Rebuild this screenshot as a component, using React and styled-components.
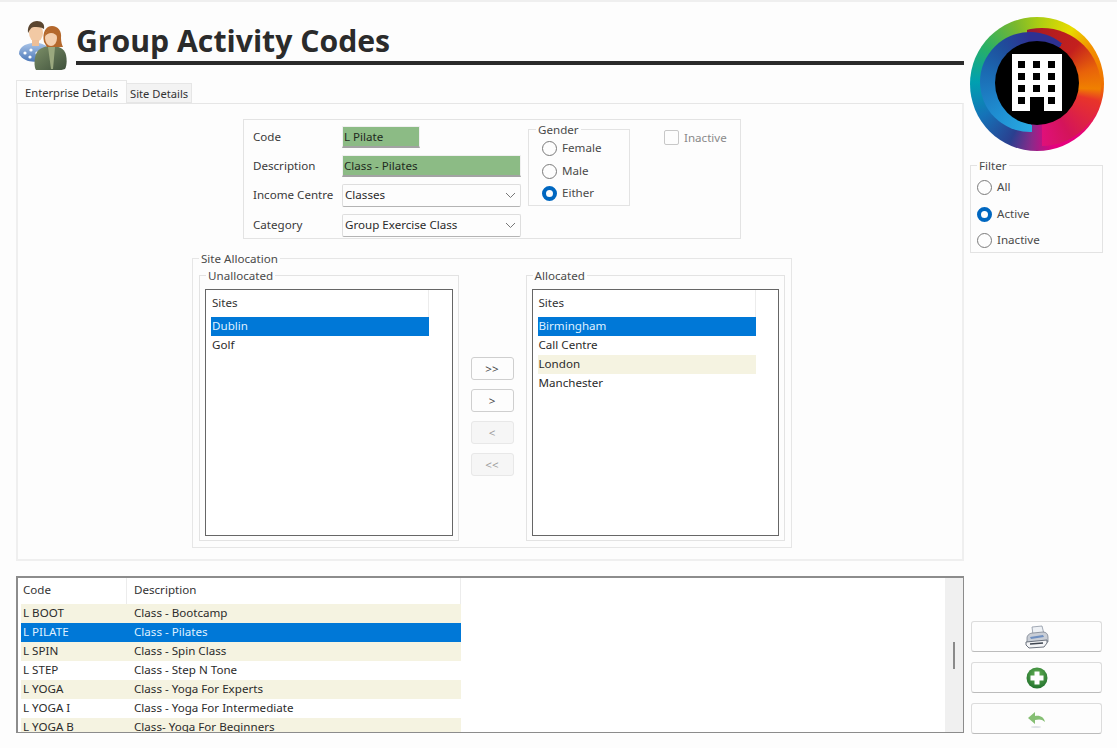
import React from "react";
import styled, { createGlobalStyle } from "styled-components";

const GROUP_CODES = [
  { code: "L BOOT", text: "Class - Bootcamp", tone: "alt" },
  { code: "L PILATE", text: "Class - Pilates", tone: "selected" },
  { code: "L SPIN", text: "Class - Spin Class", tone: "alt" },
  { code: "L STEP", text: "Class - Step N Tone" },
  { code: "L YOGA", text: "Class - Yoga For Experts", tone: "alt" },
  { code: "L YOGA I", text: "Class - Yoga For Intermediate" },
  { code: "L YOGA B", text: "Class- Yoga For Beginners", tone: "alt" },
];

const UNALLOCATED = [{ name: "Dublin", tone: "selected" }, { name: "Golf" }];

const ALLOCATED = [
  { name: "Birmingham", tone: "selected" },
  { name: "Call Centre" },
  { name: "London", tone: "alt" },
  { name: "Manchester" },
];

function PeopleIcon() {
  return (
    <svg width="50" height="50" viewBox="0 0 50 50">
      <defs>
        <linearGradient id="shirt" x1="0" y1="0" x2="0" y2="1">
          <stop offset="0" stopColor="#a9c4e8" />
          <stop offset="1" stopColor="#4c78b8" />
        </linearGradient>
        <linearGradient id="top" x1="0" y1="0" x2="1" y2="1">
          <stop offset="0" stopColor="#7d9068" />
          <stop offset="1" stopColor="#3d4f3a" />
        </linearGradient>
      </defs>
      <path d="M1 34c0-7 6-10 13-11l7 0c5 1 8 3 9 6l-8 12c-8 2-17 0-21-7z" fill="url(#shirt)" />
      <circle cx="7" cy="33" r="1.600" fill="#fff" />
      <circle cx="13" cy="30" r="1.600" fill="#fff" />
      <circle cx="12" cy="37" r="1.600" fill="#fff" />
      <circle cx="19" cy="33" r="1.600" fill="#fff" />
      <ellipse cx="18" cy="13" rx="7" ry="9" fill="#f2c9a4" />
      <path d="M10 13c-1-8 4-12 9-12s8 3 7 8c-3-2-7-2-10-2-3 0-4 3-6 6z" fill="#5b4630" />
      <rect x="14" y="20" width="7" height="6" fill="#eebf98" />
      <path d="M18 50c-2-3-2-11 0-16 2-5 7-7 12-8l7 0c6 1 10 4 11 9 1 5 1 10-1 14-9 3-21 3-29 1z" fill="url(#top)" />
      <path d="M30 27l3 22 2 0 2-22z" fill="#9aa87e" />
      <path d="M26 22c-2-10 2-16 8-16 6 0 10 5 9 12 0 4 1 7 2 9l-6 0 -10 0z" fill="#b4682c" />
      <ellipse cx="33" cy="18" rx="6" ry="8" fill="#f4cfae" />
      <path d="M27 16c1-6 6-8 10-7 3 1 5 5 4 9-2-3-5-5-8-5-2 0-4 1-6 3z" fill="#b4682c" />
    </svg>
  );
}

function BuildingIcon() {
  const cols = [48, 63, 78];
  const rows = [45, 57, 69, 81];
  return (
    <svg width="84" height="84" viewBox="25 25 84 84">
      <rect x="42" y="38" width="50" height="57" fill="#fff" />
      {rows.map((y) =>
        cols.map((x) => <rect key={`${x}-${y}`} x={x} y={y} width="7" height="7" fill="#000" />)
      )}
      <rect x="60" y="81" width="14" height="14" fill="#000" />
    </svg>
  );
}

function PrinterIcon() {
  return (
    <svg width="24" height="24" viewBox="0 0 24 24">
      <path d="M7 2l10-1 2 8-11 1z" fill="#eef1f5" stroke="#8d96a3" strokeWidth="0.8" />
      <path d="M2 13c0-3 3-5 6-5l10-1c3 0 5 2 5 5v5l-21 2z" fill="#c9ced6" stroke="#7c8490" strokeWidth="0.8" />
      <path d="M5 12l13-2 1 2-13 2z" fill="#6f8fc0" />
      <path d="M1 17l21-2 0 3-3 4-15 1-3-3z" fill="#f4f5f7" stroke="#5c6470" strokeWidth="0.9" />
      <path d="M5 19l13-1" stroke="#3e4550" strokeWidth="1.400" />
    </svg>
  );
}

function PlusIcon() {
  return (
    <svg width="22" height="22" viewBox="0 0 22 22">
      <defs>
        <radialGradient id="plusGreen" cx="0.5" cy="0.35" r="0.7">
          <stop offset="0" stopColor="#66b257" />
          <stop offset="1" stopColor="#1e6e2a" />
        </radialGradient>
      </defs>
      <circle cx="11" cy="11" r="10.500" fill="url(#plusGreen)" />
      <path d="M8.500 4.500h5v4h4v5h-4v4h-5v-4h-4v-5h4z" fill="#fff" />
    </svg>
  );
}

function UndoIcon() {
  return (
    <svg width="20" height="20" viewBox="0 0 20 20">
      <path d="M1 9l7-6v4c5-1 9 1 10 6-3-3-6-3-10-2v4z" fill="#86bf74" />
      <ellipse cx="9" cy="18" rx="5" ry="1" fill="#dfe2e6" />
    </svg>
  );
}

function Chevron() {
  return (
    <ChevronSvg width="11" height="7" viewBox="0 0 11 7">
      <path d="M1 1l4.500 4.500L10 1" fill="none" stroke="#777" strokeWidth="1" />
    </ChevronSvg>
  );
}

function RadioOption({ label, checked, gap }) {
  return (
    <RadioRow $gap={gap}>
      <RadioDot $checked={checked} />
      {label}
    </RadioRow>
  );
}

function SiteList({ sites }) {
  return (
    <ListBox>
      <ListHeader>Sites</ListHeader>
      {sites.map((s) => (
        <SiteRow key={s.name} $tone={s.tone}>
          {s.name}
        </SiteRow>
      ))}
    </ListBox>
  );
}

export default function App() {
  return (
    <>
      <GlobalStyle />
      <Page>
        <LeftColumn>
          <Header>
            <PeopleIcon />
            <Title>Group Activity Codes</Title>
          </Header>

          <Tabs>
            <Tab $active>Enterprise Details</Tab>
            <Tab>Site Details</Tab>
          </Tabs>

          <Panel>
            <FormBox>
              <Fields>
                <FieldLabel>Code</FieldLabel>
                <TextValue $width="78px">L Pilate</TextValue>
                <FieldLabel>Description</FieldLabel>
                <TextValue>Class - Pilates</TextValue>
                <FieldLabel>Income Centre</FieldLabel>
                <SelectBox>
                  Classes
                  <Chevron />
                </SelectBox>
                <FieldLabel>Category</FieldLabel>
                <SelectBox>
                  Group Exercise Class
                  <Chevron />
                </SelectBox>
              </Fields>

              <GenderGroup>
                <Legend $x="-6px">Gender</Legend>
                <RadioOption label="Female" gap="7.500px" />
                <RadioOption label="Male" gap="7.500px" />
                <RadioOption label="Either" gap="7.500px" checked />
              </GenderGroup>

              <InactiveCheck>
                <CheckSquare />
                Inactive
              </InactiveCheck>
            </FormBox>

            <AllocationGroup>
              <Legend>Site Allocation</Legend>
              <SubGroup>
                <Legend $x="1px">Unallocated</Legend>
                <SiteList sites={UNALLOCATED} />
              </SubGroup>
              <MoveButtons>
                <MoveButton>&gt;&gt;</MoveButton>
                <MoveButton>&gt;</MoveButton>
                <MoveButton $disabled>&lt;</MoveButton>
                <MoveButton $disabled>&lt;&lt;</MoveButton>
              </MoveButtons>
              <SubGroup>
                <Legend $x="1px">Allocated</Legend>
                <SiteList sites={ALLOCATED} />
              </SubGroup>
            </AllocationGroup>
          </Panel>

          <CodesGrid>
            <CodesTable>
              <CodesHeader>
                <HeaderCell>Code</HeaderCell>
                <HeaderCell $pad="7px">Description</HeaderCell>
              </CodesHeader>
              {GROUP_CODES.map((row) => (
                <CodeRow key={row.code} $tone={row.tone}>
                  <span>{row.code}</span>
                  <span>{row.text}</span>
                </CodeRow>
              ))}
            </CodesTable>
            <ScrollTrack>
              <ScrollThumb />
            </ScrollTrack>
          </CodesGrid>
        </LeftColumn>

        <RightColumn>
          <LogoRing>
            <LogoArcRight>
              <LogoArcLeft>
                <LogoCore>
                  <BuildingIcon />
                </LogoCore>
              </LogoArcLeft>
            </LogoArcRight>
          </LogoRing>

          <FilterGroup>
            <Legend>Filter</Legend>
            <RadioOption label="All" gap="11.500px" />
            <RadioOption label="Active" gap="11.500px" checked />
            <RadioOption label="Inactive" gap="11.500px" />
          </FilterGroup>

          <ActionButtons>
            <ActionButton>
              <PrinterIcon />
            </ActionButton>
            <ActionButton>
              <PlusIcon />
            </ActionButton>
            <ActionButton>
              <UndoIcon />
            </ActionButton>
          </ActionButtons>
        </RightColumn>
      </Page>
    </>
  );
}

const GlobalStyle = createGlobalStyle`
  html, body {
    margin: 0;
    height: 100%;
    background: #fdfdfd;
    overflow: hidden;
  }
  body {
    font-family: "Noto Sans", "Liberation Sans", sans-serif;
    font-size: 11.6px;
    color: #2e2e2e;
  }
`;

const Page = styled.div`
  box-sizing: border-box;
  height: 748px;
  border-top: 2px solid #efefef;
  padding: 0 14px 0 16px;
  display: grid;
  grid-template-columns: 948px 133px;
  column-gap: 6px;
`;

const LeftColumn = styled.div`
  display: flex;
  flex-direction: column;
`;

const Header = styled.div`
  display: flex;
  align-items: flex-start;
  gap: 8px;
  padding: 18px 0 0 2px;
`;

const Title = styled.h1`
  flex: 1;
  margin: 0;
  height: 41px;
  border-bottom: 4px solid #2b2b2b;
  font-family: "Open Sans", sans-serif;
  font-size: 30.200px;
  font-weight: 700;
  line-height: 42px;
  color: #2b2b2b;
`;

const Tabs = styled.div`
  display: flex;
  align-items: flex-end;
  margin-top: 10px;
  height: 23px;
  font-size: 11.200px;
`;

const Tab = styled.div`
  box-sizing: border-box;
  height: ${(p) => (p.$active ? "23px" : "20px")};
  padding: 0 ${(p) => (p.$active ? "8px" : "3px")};
  display: flex;
  align-items: center;
  background: ${(p) => (p.$active ? "#fdfdfd" : "#f3f3f3")};
  border: 1px solid #e6e6e6;
  border-bottom: ${(p) => (p.$active ? "none" : "1px solid #e6e6e6")};
  border-left: ${(p) => (p.$active ? "1px solid #e6e6e6" : "none")};
  color: #333;
`;

const Panel = styled.div`
  box-sizing: border-box;
  height: 458px;
  border: 2px solid #efefef;
  border-top: 1px solid #e6e6e6;
  padding: 15px 0 0 174px;
  display: flex;
  flex-direction: column;
  align-items: flex-start;
`;

const FormBox = styled.div`
  box-sizing: border-box;
  width: 498px;
  height: 120px;
  margin-left: 51px;
  border: 1px solid #e3e3e3;
  padding: 6px 0 0 9px;
  display: flex;
  align-items: flex-start;
`;

const Fields = styled.div`
  display: grid;
  grid-template-columns: 89px 179px;
  grid-auto-rows: 22px;
  row-gap: 7.400px;
  align-items: center;
`;

const FieldLabel = styled.div`
  margin-top: -2px;
  color: #3a3a3a;
`;

const TextValue = styled.div`
  box-sizing: border-box;
  width: ${(p) => p.$width || "179px"};
  height: 22px;
  padding-left: 1px;
  background: #8cbb85;
  border: 1px solid #f0f0f0;
  border-bottom: 2px solid #a3a3a3;
  line-height: 19px;
  color: #1f2a1e;
`;

const SelectBox = styled.div`
  box-sizing: border-box;
  height: 23px;
  padding: 0 4px 2px 2px;
  display: flex;
  align-items: center;
  justify-content: space-between;
  background: #fdfdfd;
  border: 1px solid #dedede;
  border-bottom: 1px solid #b4b4b4;
  border-radius: 2px;
  color: #2b2b2b;
`;

const ChevronSvg = styled.svg`
  margin-top: 2px;
`;

const Legend = styled.legend`
  margin-left: ${(p) => p.$x || "0"};
  padding: 0 2px;
  line-height: 15px;
  color: #4a4a4a;
`;

const GenderGroup = styled.fieldset`
  box-sizing: border-box;
  width: 102px;
  height: 84px;
  margin: -4px 0 0 7px;
  padding: 4px 0 0 13px;
  border: 1px solid #e3e3e3;
  min-width: 0;
`;

const RadioRow = styled.div`
  display: flex;
  align-items: flex-start;
  gap: 5px;
  height: 15px;
  line-height: 13px;
  margin-bottom: ${(p) => p.$gap};
  color: #4a4a4a;
`;

const RadioDot = styled.span`
  box-sizing: border-box;
  width: 15px;
  height: 15px;
  flex: none;
  border-radius: 50%;
  background: #fdfdfd;
  border: ${(p) => (p.$checked ? "4px solid #0067c0" : "1px solid #7a7a7a")};
`;

const InactiveCheck = styled.div`
  margin: 4px 0 0 34px;
  display: flex;
  align-items: center;
  gap: 5px;
  color: #8a8a8a;
`;

const CheckSquare = styled.span`
  box-sizing: border-box;
  width: 15px;
  height: 15px;
  border: 1px solid #c8c8c8;
  border-radius: 2px;
`;

const AllocationGroup = styled.fieldset`
  box-sizing: border-box;
  width: 600px;
  height: 297px;
  margin: 12px 0 0 0;
  padding: 0 6px 5px;
  border: 1px solid #e6e6e6;
  min-width: 0;
  display: flex;
`;

const SubGroup = styled.fieldset`
  box-sizing: border-box;
  width: 260px;
  height: 273px;
  margin: 2px 0 0;
  padding: 6px 5px 4px;
  border: 1px solid #e3e3e3;
  min-width: 0;
`;

const ListBox = styled.div`
  box-sizing: border-box;
  height: 247px;
  border: 1px solid #666;
  background: #fff;
`;

const ListHeader = styled.div`
  box-sizing: border-box;
  width: 223px;
  height: 27px;
  padding-left: 6px;
  border-right: 1px solid #ececec;
  line-height: 25px;
  color: #333;
`;

const rowBackground = (tone) => {
  if (tone === "selected") return "#0078d7";
  if (tone === "alt") return "#f5f3e1";
  return "transparent";
};

const SiteRow = styled.div`
  box-sizing: border-box;
  width: 218px;
  height: 19px;
  margin-left: 5px;
  padding-left: 1px;
  line-height: 17px;
  background: ${(p) => rowBackground(p.$tone)};
  color: ${(p) => (p.$tone === "selected" ? "#dff0ff" : "#2b2b2b")};
`;

const MoveButtons = styled.div`
  width: 67px;
  flex: none;
  padding-top: 91px;
  display: flex;
  flex-direction: column;
  align-items: center;
  gap: 9px;
`;

const MoveButton = styled.div`
  box-sizing: border-box;
  width: 43px;
  height: 23px;
  display: flex;
  align-items: center;
  justify-content: center;
  border: 1px solid ${(p) => (p.$disabled ? "#e8e8e8" : "#cfcfcf")};
  border-radius: 3px;
  background: ${(p) => (p.$disabled ? "#f6f6f6" : "#fdfdfd")};
  color: ${(p) => (p.$disabled ? "#9a9a9a" : "#444")};
`;

const CodesGrid = styled.div`
  box-sizing: border-box;
  height: 157px;
  margin-top: 15px;
  border: 2px solid #8c8c8c;
  border-right-width: 1px;
  border-bottom-width: 1px;
  display: flex;
  background: #fff;
  overflow: hidden;
`;

const CodesTable = styled.div`
  flex: 1;
  overflow: hidden;
`;

const CodesHeader = styled.div`
  display: grid;
  grid-template-columns: 109px 334px;
  height: 26px;
`;

const HeaderCell = styled.div`
  padding-left: ${(p) => p.$pad || "5px"};
  line-height: 23px;
  border-right: 1px solid #ececec;
  color: #333;
`;

const CodeRow = styled.div`
  display: grid;
  grid-template-columns: 106px 334px;
  width: 440px;
  height: 19px;
  margin-left: 3px;
  line-height: 17px;
  background: ${(p) => rowBackground(p.$tone)};
  color: ${(p) => (p.$tone === "selected" ? "#dff0ff" : "#2b2b2b")};

  span:first-child {
    padding-left: 2px;
  }
  span:last-child {
    padding-left: 7px;
  }
`;

const ScrollTrack = styled.div`
  width: 18px;
  flex: none;
  display: flex;
  align-items: center;
  justify-content: center;
  background: #f0f0f0;
`;

const ScrollThumb = styled.div`
  width: 2px;
  height: 27px;
  background: #8a8a8a;
`;

const RightColumn = styled.div`
  display: flex;
  flex-direction: column;
  align-items: flex-start;
`;

const LogoRing = styled.div`
  width: 134px;
  height: 134px;
  margin-top: 15px;
  border-radius: 50%;
  display: flex;
  align-items: center;
  justify-content: center;
  background: conic-gradient(
    #a8cc14 0deg,
    #e8dc00 32deg,
    #f39200 55deg,
    #f07000 92deg,
    #e8322a 108deg,
    #e6007e 140deg,
    #e6007e 165deg,
    #8a2a8a 185deg,
    #2a3f8f 205deg,
    #1573b8 240deg,
    #00a0b0 272deg,
    #28b067 305deg,
    #7ab82e 340deg,
    #a8cc14 360deg
  );
`;

const LogoArcRight = styled.div`
  width: 118px;
  height: 118px;
  flex: none;
  margin: 6px 0 0 10px;
  border-radius: 50%;
  display: flex;
  align-items: center;
  justify-content: center;
  background: conic-gradient(
    #b01c20 0deg,
    #c4201e 40deg,
    #e8620a 70deg,
    #f08000 92deg,
    #e8342a 104deg,
    #d4145a 150deg,
    #e0107a 180deg,
    transparent 180deg,
    transparent 345deg,
    #8e1a3a 345deg,
    #b01c20 360deg
  );
`;

const LogoArcLeft = styled.div`
  width: 100px;
  height: 100px;
  flex: none;
  margin: 0 24px 10px 0;
  border-radius: 50%;
  display: flex;
  align-items: center;
  justify-content: center;
  background: conic-gradient(
    #2e3192 0deg,
    #2e3192 40deg,
    transparent 40deg,
    transparent 178deg,
    #29abe2 178deg,
    #1f8fd2 225deg,
    #1b6cb4 280deg,
    #1e4f9c 320deg,
    #2e3192 360deg
  );
`;

const LogoCore = styled.div`
  width: 84px;
  height: 84px;
  flex: none;
  margin: 1px 0 0 14px;
  border-radius: 50%;
  background: #000;
  display: flex;
`;

const FilterGroup = styled.fieldset`
  box-sizing: border-box;
  width: 133px;
  height: 95px;
  margin: 7px 0 0;
  padding: 7px 0 0 6px;
  border: 1px solid #e3e3e3;
  min-width: 0;
`;

const ActionButtons = styled.div`
  margin-top: auto;
  margin-bottom: 14px;
  margin-left: 1px;
  display: flex;
  flex-direction: column;
  gap: 10px;
`;

const ActionButton = styled.div`
  box-sizing: border-box;
  width: 131px;
  height: 31px;
  display: flex;
  align-items: center;
  justify-content: center;
  border: 1px solid #dcdcdc;
  border-bottom-color: #bcbcbc;
  border-radius: 3px;
  background: #fdfdfd;
`;
